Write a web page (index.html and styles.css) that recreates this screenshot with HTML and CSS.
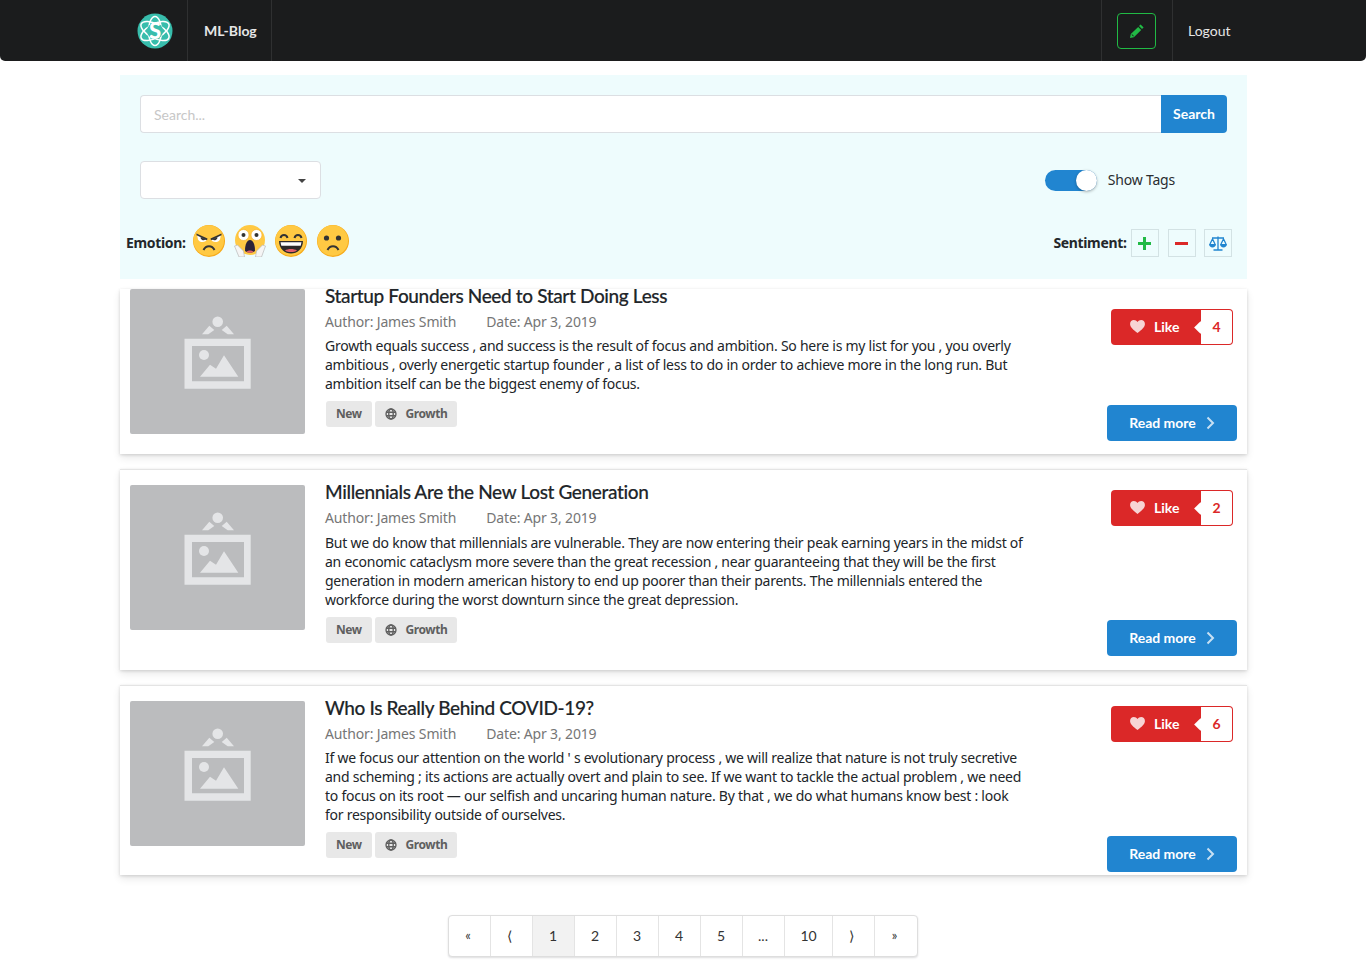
FILE: index.html
```html
<!DOCTYPE html>
<html lang="en">
<head>
<meta charset="utf-8">
<title>ML-Blog</title>
<link rel="stylesheet" href="styles.css">
</head>
<body>
<svg class="defs" width="0" height="0" aria-hidden="true">
  <symbol id="ph" viewBox="0 0 175 145">
    <rect width="175" height="145" fill="#bbbcbe"/>
    <g fill="#e4e5e7">
      <circle cx="87.700" cy="32.700" r="5.300"/>
      <path d="M79.300 36.700l5 4.300-6 4.300H72zM96.700 36.700l-5 4.300 6 4.300H104z"/>
      <path fill-rule="evenodd" d="M54.500 49.700h66.200v50H54.500zM62 57v35.300h52V57z"/>
      <circle cx="74" cy="66" r="5"/>
      <path d="M70 87.700l10-12 6 4 8-13.400 14.300 21.400z"/>
    </g>
  </symbol>
  <symbol id="heart" viewBox="0 0 16 14"><path d="M8 14C3 10 0 7.500 0 4.200 0 1.800 1.800 0 4.100 0 5.700 0 7.200.8 8 2.100 8.800.8 10.300 0 11.900 0 14.200 0 16 1.800 16 4.200 16 7.500 13 10 8 14z"/></symbol>
  <symbol id="chev" viewBox="0 0 9 14"><path d="M1.500 1.500L7 7l-5.500 5.500" fill="none" stroke="currentColor" stroke-width="2"/></symbol>
  <symbol id="globe" viewBox="0 0 14 14"><g fill="none" stroke="#5f5f5f" stroke-width="1.600"><circle cx="7" cy="7" r="5.800"/><ellipse cx="7" cy="7" rx="2.600" ry="5.800"/><path d="M1.200 5h11.600M1.200 9h11.600"/></g></symbol>
</svg>
<nav class="navbar">
  <div class="nav-logo">
    <svg width="36" height="36" viewBox="0 0 36 36"><circle cx="18" cy="18" r="17.500" fill="#38bdac"/><g fill="none" stroke="#fff" stroke-width="1.500"><ellipse cx="18" cy="18" rx="15.500" ry="7" transform="rotate(28 18 18)"/><ellipse cx="18" cy="18" rx="15.500" ry="7" transform="rotate(-28 18 18)"/><ellipse cx="18" cy="18" rx="14.500" ry="6.500" transform="rotate(90 18 18)"/></g><circle cx="18" cy="18" r="8" fill="#38bdac"/><text class="logo-s" x="18" y="25.500" text-anchor="middle">S</text></svg>
  </div>
  <a class="nav-item nav-brand">ML-Blog</a>
  <div class="nav-spacer"></div>
  <div class="nav-item nav-write">
    <span class="write-btn"><svg width="14" height="14" viewBox="0 0 14 14"><path fill="#21ba45" d="M10.600.5l3 3-1.600 1.600-3-3zM8.200 2.900l3 3-7.300 7.300L0 14l.8-3.900zM1.500 10.800l1.800 1.800.6-.6-1.800-1.800z"/></svg></span>
  </div>
  <a class="nav-item nav-logout">Logout</a>
</nav>

<main class="container">
  <section class="filters">
    <div class="search-row">
      <input class="search-input" placeholder="Search...">
      <button class="search-btn">Search</button>
    </div>
    <div class="select-row">
      <div class="select"><span class="caret"></span></div>
      <div class="toggle-wrap"><span class="toggle"><span class="knob"></span></span><span class="toggle-label">Show Tags</span></div>
    </div>
    <div class="reaction-row">
      <div class="emotions">
        <b class="rlabel">Emotion:</b>
        <svg class="emoji" viewBox="0 0 32 32"><circle cx="16" cy="16" r="16" fill="#f7ab1b"/><circle cx="15.700" cy="15.500" r="15.300" fill="#ffc943"/><path d="M4 9.500l10 4.500c-.5 4-7.500 4-9 .5zM28 9.500L18 14c.5 4 7.500 4 9 .5z" fill="#fff"/><path d="M3.500 8.500l11 5-.5 1.800-10.500-5zM28.500 8.500l-11 5 .5 1.800 10.500-5zM7.500 12a3 3 0 0 0 5 2.500zM24.500 12a3 3 0 0 1-5 2.500z" fill="#333"/><path d="M10.500 25c2.500-5 8.500-5 11 0" fill="none" stroke="#333" stroke-width="2"/></svg>
        <svg class="emoji" viewBox="0 0 32 32"><circle cx="16" cy="15" r="15" fill="#ffc943"/><circle cx="9.500" cy="10" r="5.500" fill="#fff" stroke="#f7ab1b" stroke-width=".6"/><circle cx="22.500" cy="10" r="5.500" fill="#fff" stroke="#f7ab1b" stroke-width=".6"/><circle cx="9.500" cy="10" r="2" fill="#333"/><circle cx="22.500" cy="10" r="2" fill="#333"/><path d="M11 26c0-7 2-11 5-11s5 4 5 11c-3 2-7 2-10 0z" fill="#2c2338"/><path d="M12.500 27c1-2 6-2 7 0-2 1-5 1-7 0z" fill="#e35f6a"/><path d="M.5 21l3-1 6 6 1 6H5zM31.500 21l-3-1-6 6-1 6h6z" fill="#f5f5f5" stroke="#b9b9b9" stroke-width=".7"/></svg>
        <svg class="emoji" viewBox="0 0 32 32"><circle cx="16" cy="16" r="16" fill="#f7ab1b"/><circle cx="15.700" cy="15.500" r="15.300" fill="#ffc943"/><path d="M5.500 13c1-4 6-4 7 0M19.500 13c1-4 6-4 7 0" fill="none" stroke="#333" stroke-width="2"/><path d="M4 16h24c0 8-6 12.500-12 12.500S4 24 4 16z" fill="#2d2a2a"/><path d="M5.500 17.200h21l-.8 3.600H6.300z" fill="#fff"/><path d="M10 25.500c3-2 9-2 12 0-3 2-9 2-12 0z" fill="#e35f6a"/></svg>
        <svg class="emoji" viewBox="0 0 32 32"><circle cx="16" cy="16" r="16" fill="#f7ab1b"/><circle cx="15.700" cy="15.500" r="15.300" fill="#ffc943"/><circle cx="9.500" cy="13" r="2.600" fill="#333"/><circle cx="21.500" cy="13" r="2.600" fill="#333"/><path d="M10.500 25c2.500-5 8.500-5 11 0" fill="none" stroke="#333" stroke-width="2"/></svg>
      </div>
      <div class="sentiments">
        <b class="rlabel">Sentiment:</b>
        <span class="sbtn"><svg width="13" height="13" viewBox="0 0 13 13"><path fill="#21ba45" d="M5 0h3v5h5v3H8v5H5V8H0V5h5z"/></svg></span>
        <span class="sbtn"><svg width="13" height="13" viewBox="0 0 13 13"><path fill="#db2828" d="M0 5h13v3H0z"/></svg></span>
        <span class="sbtn"><svg width="18" height="15" viewBox="0 0 18 15"><g fill="none" stroke="#2185d0" stroke-width="1.300"><path d="M3 2h12M9 .5V14M4.500 14h9M1 8l2.500-5L6 8M12 8l2.500-5L17 8"/></g><path fill="#2185d0" d="M0 8h7c0 4.500-7 4.500-7 0zM11 8h7c0 4.500-7 4.500-7 0z"/></svg></span>
      </div>
    </div>
  </section>

  <article class="card card-first">
    <svg class="thumb"><use href="#ph"/></svg>
    <div class="card-body">
      <h3 class="title">Startup Founders Need to Start Doing Less</h3>
      <div class="meta"><span>Author: James Smith</span><span>Date: Apr 3, 2019</span></div>
      <p class="desc">Growth equals success , and success is the result of focus and ambition. So here is my list for you , you overly<br>ambitious , overly energetic startup founder , a list of less to do in order to achieve more in the long run. But<br>ambition itself can be the biggest enemy of focus.</p>
      <div class="tags"><span class="tag">New</span><span class="tag"><svg class="globe"><use href="#globe"/></svg>Growth</span></div>
    </div>
    <div class="card-side">
      <div class="like"><span class="like-btn"><svg class="heart"><use href="#heart"/></svg>Like</span><span class="like-count">4</span></div>
      <button class="read">Read more<svg class="chev"><use href="#chev"/></svg></button>
    </div>
  </article>

  <article class="card card-second">
    <svg class="thumb"><use href="#ph"/></svg>
    <div class="card-body">
      <h3 class="title">Millennials Are the New Lost Generation</h3>
      <div class="meta"><span>Author: James Smith</span><span>Date: Apr 3, 2019</span></div>
      <p class="desc">But we do know that millennials are vulnerable. They are now entering their peak earning years in the midst of<br>an economic cataclysm more severe than the great recession , near guaranteeing that they will be the first<br>generation in modern american history to end up poorer than their parents. The millennials entered the<br>workforce during the worst downturn since the great depression.</p>
      <div class="tags"><span class="tag">New</span><span class="tag"><svg class="globe"><use href="#globe"/></svg>Growth</span></div>
    </div>
    <div class="card-side">
      <div class="like"><span class="like-btn"><svg class="heart"><use href="#heart"/></svg>Like</span><span class="like-count">2</span></div>
      <button class="read">Read more<svg class="chev"><use href="#chev"/></svg></button>
    </div>
  </article>

  <article class="card card-third">
    <svg class="thumb"><use href="#ph"/></svg>
    <div class="card-body">
      <h3 class="title">Who Is Really Behind COVID-19?</h3>
      <div class="meta"><span>Author: James Smith</span><span>Date: Apr 3, 2019</span></div>
      <p class="desc">If we focus our attention on the world ' s evolutionary process , we will realize that nature is not truly secretive<br>and scheming ; its actions are actually overt and plain to see. If we want to tackle the actual problem , we need<br>to focus on its root — our selfish and uncaring human nature. By that , we do what humans know best : look<br>for responsibility outside of ourselves.</p>
      <div class="tags"><span class="tag">New</span><span class="tag"><svg class="globe"><use href="#globe"/></svg>Growth</span></div>
    </div>
    <div class="card-side">
      <div class="like"><span class="like-btn"><svg class="heart"><use href="#heart"/></svg>Like</span><span class="like-count">6</span></div>
      <button class="read">Read more<svg class="chev"><use href="#chev"/></svg></button>
    </div>
  </article>

  <div class="pager-wrap">
    <div class="pager">
      <a class="pg sm">«</a><a class="pg ang">⟨</a><a class="pg active">1</a><a class="pg">2</a><a class="pg">3</a><a class="pg">4</a><a class="pg">5</a><a class="pg">...</a><a class="pg wide">10</a><a class="pg ang">⟩</a><a class="pg sm">»</a>
    </div>
  </div>
</main>
</body>
</html>
```
FILE: styles.css
```css
* { box-sizing: border-box; }
html, body { margin: 0; padding: 0; }
body { background: #fff; color: #212529; font-family: "Lato", "Liberation Sans", sans-serif; font-size: 14px; height: 977px; overflow: hidden; }
.defs { position: absolute; }

.navbar { display: flex; height: 61px; background: #1b1c1d; border-radius: 0 0 5px 5px; padding-left: 137px; padding-right: 135.500px; align-items: stretch; white-space: nowrap; }
.nav-logo { display: flex; align-items: center; padding-right: 14px; border-right: 1px solid #2f3031; }
.nav-logo svg { display: block; margin-top: 1px; }
.logo-s { font: 900 22px "Lato", sans-serif; fill: #fff; }
.nav-item { display: flex; align-items: center; color: #e6e6e6; font-size: 14px; }
.nav-brand { font-weight: 700; padding: 0 15px 0 16px; border-right: 1px solid #2f3031; width: 84px; }
.nav-spacer { flex: 1; }
.nav-write { padding: 0 16px 0 15px; border-left: 1px solid #2f3031; border-right: 1px solid #2f3031; }
.write-btn { display: flex; width: 39px; height: 36px; align-items: center; justify-content: center; border: 1px solid #21ba45; border-radius: 4px; }
.nav-logout { padding-left: 14.500px; }

.container { width: 1127px; margin: 14px 0 0 120px; }
.filters { height: 204px; background: #eefcfd; padding: 20px 15px 0 6px; }
.search-row { display: flex; height: 38px; margin: 0 5px 0 14px; }
.search-input { flex: 1; min-width: 0; border: 1px solid #dcdfe3; border-right: 0; border-radius: 4px 0 0 4px; padding: 0 13px; font: 14px "Lato", sans-serif; background: #fff; outline: 0; }
.search-input::placeholder { color: #c7c7c7; }
.search-btn { width: 66px; padding: 0 0 2px; border: 0; border-radius: 0 4px 4px 0; background: #2185d0; color: #fff; font: 700 14px "Lato", sans-serif; }
.select-row { display: flex; justify-content: space-between; align-items: flex-start; margin: 28px 57px 0 14px; height: 38px; }
.select { position: relative; width: 181px; height: 38px; background: #fff; border: 1px solid #dcdfe3; border-radius: 4px; }
.caret { position: absolute; right: 14px; top: 17px; border: 4px solid transparent; border-top-color: #444; border-bottom: 0; }
.toggle-wrap { display: flex; align-items: center; margin-top: 9px; }
.toggle { display: flex; justify-content: flex-end; width: 52px; height: 21px; background: #2185d0; border-radius: 11px; }
.knob { width: 21px; height: 21px; border-radius: 50%; background: #fff; box-shadow: 0 1px 3px rgba(0,0,0,.3); }
.toggle-label { margin: 0 0 2px 11px; font: 14px "Noto Sans", sans-serif; letter-spacing: -.2px; color: #2a2d30; }
.reaction-row { display: flex; justify-content: space-between; align-items: center; margin-top: 26px; }
.emotions, .sentiments { display: flex; align-items: center; }
.rlabel { font: 700 14px "Noto Sans", sans-serif; letter-spacing: -.35px; color: #23272b; margin-right: 7px; }
.emotions .rlabel { margin-top: 2px; margin-right: 7.500px; }
.sentiments .rlabel { margin: 0 4.500px 2px 0; }
.emoji { width: 32px; height: 32px; margin-right: 9px; }
.emoji:nth-of-type(3) { margin-right: 10px; }
.sbtn { display: flex; width: 28px; height: 28px; margin-right: 9px; padding-right: 1px; align-items: center; justify-content: center; background: #eefcfd; border: 1px solid #d3e2e4; }
.sbtn:nth-of-type(2) { margin-right: 8px; }
.sbtn:last-child { margin-right: 0; padding-right: 0; }
.sentiments { margin-top: 4px; }

.card { display: flex; background: #fff; margin-top: 15px; padding: 15px 10px 0; box-shadow: 0 1px 3px rgba(0,0,0,.14), 0 4px 8px rgba(0,0,0,.09); border-top: 1px solid #e4e4e4; white-space: nowrap; }
.card-first { margin-top: 10px; height: 165px; padding-top: 0; border-top: 0; }
.card-second { height: 201px; }
.card-third { height: 190px; }
.thumb { flex: none; width: 175px; height: 145px; border-radius: 2px; }
.card-body { width: 705px; margin-left: 20px; }
.title { margin: -4px 0 0; font: 500 19px/22px "Lato", sans-serif; color: #212529; letter-spacing: -.36px; -webkit-text-stroke: .15px #212529; }
.meta { display: flex; gap: 30px; margin-top: 5px; font: 14px/20px "Noto Sans", sans-serif; letter-spacing: -.15px; color: #767676; }
.desc { margin: 4px 0 0; font: 14px/19px "Noto Sans", sans-serif; letter-spacing: -.25px; color: #212529; }
.card-second .desc { margin-top: 5px; }
.tags { display: flex; gap: 3px; margin: 8px 0 0 1px; }
.tag { display: flex; align-items: center; height: 26px; padding: 0 10px 2px; background: #e8e8e8; border-radius: 3px; font: 700 12px "Noto Sans", sans-serif; letter-spacing: -.45px; color: #5f5f5f; }
.globe { width: 12px; height: 12px; margin: 2px 9px 0 0; }
.card-side { flex: 1; display: flex; flex-direction: column; align-items: flex-end; justify-content: space-between; padding-bottom: 14px; }
.card-first .card-side { padding-bottom: 13px; }
.card-third .card-side { padding-bottom: 3px; }
.like { display: flex; height: 36px; margin-right: 4px; margin-top: 5px; }
.card-first .like { margin-top: 20px; }
.like-btn { display: flex; align-items: center; width: 90px; padding: 0 0 1px 19px; background: #db2828; color: #fff; font-weight: 700; border-radius: 4px 0 0 4px; }
.heart { width: 15px; height: 13px; margin-right: 9px; fill: #fff; opacity: .8; }
.like-count { position: relative; display: flex; align-items: center; justify-content: center; width: 32px; padding-bottom: 1px; color: #db2828; font-weight: 700; border: 1px solid #db2828; border-left: 0; border-radius: 0 4px 4px 0; }
.like-count::before { content: ""; position: absolute; left: -5px; top: 13px; width: 9px; height: 9px; background: #fff; transform: rotate(45deg); }
.read { display: flex; align-items: center; justify-content: center; width: 130px; height: 36px; padding: 0 0 2px; border: 0; border-radius: 4px; background: #2185d0; color: #fff; font: 700 14px "Lato", sans-serif; }
.chev { width: 9px; height: 14px; margin: 2px 0 0 10px; opacity: .75; }

.pager-wrap { display: flex; justify-content: center; margin-top: 40px; padding-right: 2px; }
.pager { display: flex; height: 42px; background: #fff; border: 1px solid #dedede; border-radius: 4px; box-shadow: 0 1px 2px rgba(34,36,38,.15); }
.pg { display: flex; align-items: center; justify-content: center; width: 42px; padding-bottom: 2px; font-size: 14px; color: #333; border-right: 1px solid #e4e4e4; }
.pg:last-child { border-right: 0; }
.pg.wide { width: 48px; padding-left: 1px; }
.pg.sm { font-size: 13px; padding-right: 2px; }
.pg.ang { padding-right: 3px; }
.pg.active { background: #f2f2f2; }
```
